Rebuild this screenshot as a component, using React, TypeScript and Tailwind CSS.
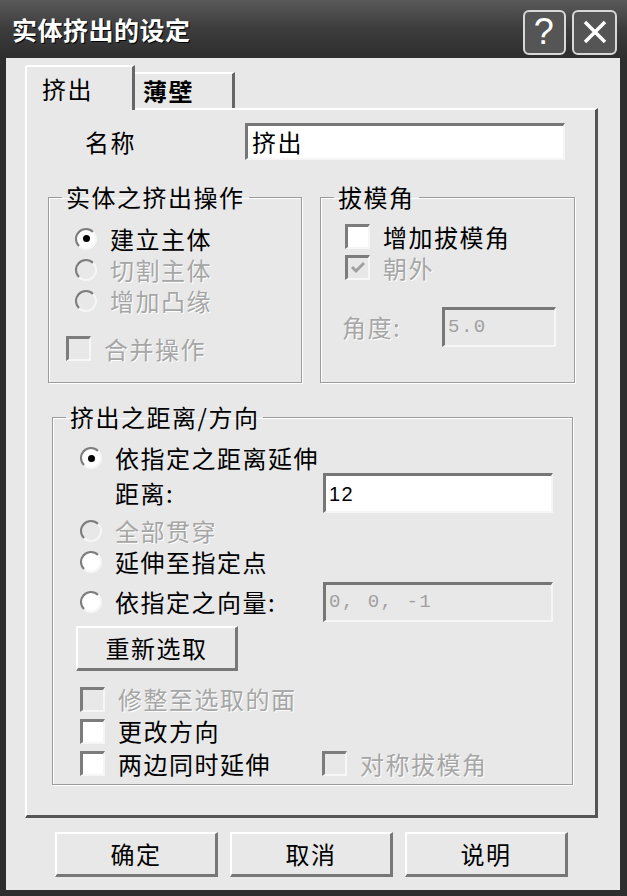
import React from 'react';

const DIS = 'text-[#a6a6a6] [text-shadow:1px_1px_0_#ffffff]';

function Radio({ checked, disabled }: { checked?: boolean; disabled?: boolean }) {
  return (
    <span
      className={`flex items-center justify-center w-[22px] h-[22px] rounded-full shrink-0 border-2 border-t-[#7c7c7c] border-l-[#7c7c7c] border-b-[#f6f6f6] border-r-[#f6f6f6] ${
        disabled ? 'bg-[#e8e8e8]' : 'bg-white'
      }`}
    >
      {checked && <span className="w-[7px] h-[7px] rounded-full bg-black" />}
    </span>
  );
}

function Check({ checked, disabled }: { checked?: boolean; disabled?: boolean }) {
  return (
    <span
      className={`flex items-center justify-center w-[25px] h-[25px] shrink-0 border-t-[3px] border-l-[3px] border-t-[#7c7c7c] border-l-[#7c7c7c] border-b-2 border-r-2 border-b-[#f6f6f6] border-r-[#f6f6f6] ${
        disabled ? 'bg-[#e8e8e8]' : 'bg-white'
      }`}
    >
      {checked && (
        <svg width="16" height="14" viewBox="0 0 16 14">
          <path d="M2 6 L6 10 L14 2" stroke={disabled ? '#a0a0a0' : '#000'} strokeWidth="3" fill="none" />
        </svg>
      )}
    </span>
  );
}

function Field({ value, disabled, mono, w }: { value: string; disabled?: boolean; mono?: boolean; w: string }) {
  return (
    <div
      className={`${w} shrink-0 h-[40px] flex items-center pl-[3px] border-t-[3px] border-l-[3px] border-t-[#777777] border-l-[#777777] border-b-2 border-r-2 border-b-[#f6f6f6] border-r-[#f6f6f6] ${
        disabled ? 'bg-[#e8e8e8] text-[#a0a0a0]' : 'bg-white text-black'
      } ${mono ? "font-['Liberation_Mono',monospace] text-[19px]" : "font-['Liberation_Sans',sans-serif] text-[20px]"}`}
    >
      {value}
    </div>
  );
}

function Btn({ label, w }: { label: string; w: string }) {
  return (
    <div
      className={`${w} h-[45px] flex items-center justify-center bg-[#e8e8e8] border-t-2 border-l-2 border-t-white border-l-white border-b-[3px] border-r-[3px] border-b-[#777777] border-r-[#777777]`}
    >
      {label}
    </div>
  );
}

function RadioRow({ label, checked, disabled, h = 'h-[31px]' }: { label: string; checked?: boolean; disabled?: boolean; h?: string }) {
  return (
    <div className={`flex items-center gap-[13px] ${h}`}>
      <Radio checked={checked} disabled={disabled} />
      <span className={disabled ? DIS : ''}>{label}</span>
    </div>
  );
}

function CheckRow({ label, checked, disabled }: { label: string; checked?: boolean; disabled?: boolean }) {
  return (
    <div className="flex items-center gap-[13px]">
      <Check checked={checked} disabled={disabled} />
      <span className={disabled ? DIS : ''}>{label}</span>
    </div>
  );
}

function Group({ title, className, children }: { title: string; className: string; children: React.ReactNode }) {
  return (
    <fieldset className={`min-w-0 border border-[#9c9c9c] shadow-[inset_1px_1px_0_#ffffff,1px_1px_0_#ffffff] ${className}`}>
      <legend className="ml-[13px] px-[4px] leading-[28px]">{title}</legend>
      {children}
    </fieldset>
  );
}

export default function App() {
  return (
    <div className="w-[627px] h-[896px] bg-[#2e2e2e] flex flex-col font-['Noto_Sans_CJK_SC','Noto_Sans_CJK_TC',sans-serif] text-[24px] tracking-[1.5px] text-black leading-none">
      {/* title bar */}
      <div className="h-[58px] shrink-0 flex items-center pl-[12px] pr-[10px] bg-gradient-to-b from-[#5a5a5a] via-[#3c3c3c] to-[#2e2e2e]">
        <span className="text-white font-bold text-[25px] tracking-[0.5px] [text-shadow:1px_1px_0_#000]">实体挤出的设定</span>
        <div className="ml-auto flex gap-[6px] mt-[6px]">
          <div className="w-[43px] h-[45px] rounded-[6px] border-2 border-[#d8d8d8] bg-[#555555] flex items-center justify-center text-white font-['Liberation_Sans',sans-serif] text-[36px]">
            ?
          </div>
          <div className="w-[45px] h-[45px] rounded-[6px] border-2 border-[#d8d8d8] bg-[#555555] flex items-center justify-center">
            <svg width="30" height="30" viewBox="0 0 30 30">
              <path d="M5 5 L25 25 M25 5 L5 25" stroke="#fff" strokeWidth="3.5" />
            </svg>
          </div>
        </div>
      </div>

      {/* body */}
      <div className="flex-1 ml-[6px] mr-[7px] mb-[6px] bg-[#e8e8e8] flex flex-col pl-[19px] pr-[22px] pt-[7px]">
        {/* tabs */}
        <div className="flex items-end h-[43px] relative z-10">
          <div className="w-[110px] h-[45px] -mb-[2px] bg-[#e8e8e8] border-t-2 border-l-2 border-white border-r-[3px] border-r-[#666666] rounded-tl-[3px] flex items-start pl-[15px] pt-[10px]">
            挤出
          </div>
          <div className="w-[100px] h-[36px] border-t-2 border-t-white border-r-[3px] border-r-[#666666] flex items-start pl-[8px] pt-[5px] font-bold">
            薄壁
          </div>
        </div>

        {/* panel */}
        <div className="h-[710px] border-t-2 border-l-2 border-white border-r-[3px] border-b-[3px] border-r-[#555555] border-b-[#555555] flex flex-col">
          {/* name */}
          <div className="flex items-center mt-[13px] h-[37px]">
            <span className="pl-[58px] w-[218px]">名称</span>
            <div className="w-[320px] h-[37px] flex items-center pl-[4px] bg-white border-t-[3px] border-l-[3px] border-t-[#777777] border-l-[#777777] border-b-2 border-r-2 border-b-[#f6f6f6] border-r-[#f6f6f6]">
              挤出
            </div>
          </div>

          {/* two groups */}
          <div className="flex mt-[23px] ml-[21px] gap-[18px]">
            <Group title="实体之挤出操作" className="w-[254px] h-[200px]">
              <div className="pt-[12px] pl-[26px]">
                <RadioRow label="建立主体" checked />
                <RadioRow label="切割主体" disabled />
                <RadioRow label="增加凸缘" disabled />
              </div>
              <div className="mt-[20px] pl-[17px]">
                <CheckRow label="合并操作" disabled />
              </div>
            </Group>

            <Group title="拔模角" className="w-[255px] h-[200px]">
              <div className="pt-[10px] pl-[24px] flex flex-col">
                <div className="h-[31px] flex items-center">
                  <CheckRow label="增加拔模角" />
                </div>
                <div className="h-[31px] flex items-center">
                  <CheckRow label="朝外" checked disabled />
                </div>
              </div>
              <div className="mt-[24px] pl-[21px] flex items-center">
                <span className={`w-[100px] ${DIS}`}>角度:</span>
                <Field value="5.0" disabled mono w="w-[114px]" />
              </div>
            </Group>
          </div>

          {/* distance group */}
          <Group title="挤出之距离/方向" className="mt-[20px] ml-[25px] w-[521px] h-[382px]">
            <div className="pt-[12px] pl-[27px] flex flex-col">
              <RadioRow label="依指定之距离延伸" checked h="h-[30px]" />
              <div className="h-[40px] flex items-center pl-[35px]">
                <span className="w-[208px]">距离:</span>
                <Field value="12" w="w-[230px]" />
              </div>
              <RadioRow label="全部贯穿" disabled h="h-[30px] mt-[3px]" />
              <RadioRow label="延伸至指定点" h="h-[32px]" />
              <div className="h-[40px] mt-[4px] flex items-center">
                <div className="w-[243px] shrink-0 flex items-center gap-[13px]">
                  <Radio />
                  <span className="whitespace-nowrap">依指定之向量:</span>
                </div>
                <Field value="0,  0,  -1" disabled mono w="w-[230px]" />
              </div>
              <div className="mt-[4px] -ml-[4px]">
                <Btn label="重新选取" w="w-[162px]" />
              </div>
              <div className="mt-[12px] flex flex-col">
                <div className="h-[32px] flex items-center">
                  <CheckRow label="修整至选取的面" disabled />
                </div>
                <div className="h-[32px] flex items-center">
                  <CheckRow label="更改方向" />
                </div>
                <div className="h-[33px] flex items-center">
                  <div className="w-[242px]">
                    <CheckRow label="两边同时延伸" />
                  </div>
                  <CheckRow label="对称拔模角" disabled />
                </div>
              </div>
            </div>
          </Group>
        </div>

        {/* bottom buttons */}
        <div className="flex gap-[12px] mt-[14px] pl-[30px]">
          <Btn label="确定" w="w-[163px]" />
          <Btn label="取消" w="w-[163px]" />
          <Btn label="说明" w="w-[163px]" />
        </div>
      </div>
    </div>
  );
}
